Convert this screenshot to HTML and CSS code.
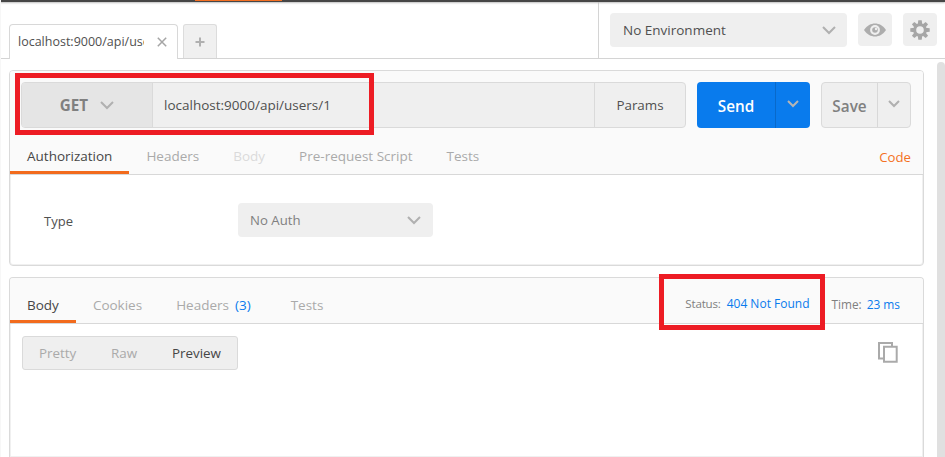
FILE: index.html
```html
<!DOCTYPE html>
<html lang="en">
<head>
<meta charset="utf-8">
<title>Request builder</title>
<link rel="stylesheet" href="styles.css">
</head>
<body>
<div class="app">
  <div class="topbar"><span class="topbar-active"></span></div>
  <header class="header">
    <div class="tabs">
      <div class="tab"><span class="tab-name">localhost:9000/api/users/1</span>
        <svg class="close" width="10" height="10" viewBox="0 0 10 10"><path d="M.8.8 9.2 9.2M9.2.8.8 9.2"/></svg></div>
      <div class="tab-add"><svg width="10" height="10" viewBox="0 0 10 10"><path d="M5 .5v9M.5 5h9"/></svg></div>
    </div>
    <div class="environment">
      <div class="select env-select"><span>No Environment</span><svg class="chevron" width="14" height="9" viewBox="0 0 14 9"><path d="M1 1l6 6 6-6"/></svg></div>
      <div class="icon-button eye"><svg width="22" height="14" viewBox="0 0 22 14"><path fill="#adadad" d="M0 7C3 2.500 7 .5 11 .5S19 2.500 22 7C19 11.500 15 13.500 11 13.500S3 11.500 0 7z"/><circle cx="11" cy="7" r="4.900" fill="#efefef"/><circle cx="11" cy="7" r="2.800" fill="#adadad"/><circle cx="12" cy="6" r="1.200" fill="#efefef"/></svg></div>
      <div class="icon-button gear"><svg width="20" height="20" viewBox="-10 -10 20 20"><g fill="#a6a6a6"><path id="tooth" d="M-1.700-9.700h3.400l.5 4h-4.400z"/><use href="#tooth" transform="rotate(45)"/><use href="#tooth" transform="rotate(90)"/><use href="#tooth" transform="rotate(135)"/><use href="#tooth" transform="rotate(180)"/><use href="#tooth" transform="rotate(225)"/><use href="#tooth" transform="rotate(270)"/><use href="#tooth" transform="rotate(315)"/></g><circle r="5.300" fill="none" stroke="#a6a6a6" stroke-width="3"/></svg></div>
    </div>
  </header>
  <main class="content">
    <section class="panel request">
      <div class="panel-head">
        <div class="url-row">
          <div class="url-group">
            <div class="method"><span>GET</span><svg class="chevron" width="14" height="9" viewBox="0 0 14 9"><path d="M1 1l6 6 6-6"/></svg></div>
            <div class="url"><span>localhost:9000/api/users/1</span></div>
            <div class="params"><span>Params</span></div>
          </div>
          <div class="split send"><div class="split-main"><span>Send</span></div><div class="split-arrow"><svg class="chevron" width="12" height="8" viewBox="0 0 12 8"><path d="M1 1l5 5 5-5"/></svg></div></div>
          <div class="split save"><div class="split-main"><span>Save</span></div><div class="split-arrow"><svg class="chevron" width="12" height="8" viewBox="0 0 12 8"><path d="M1 1l5 5 5-5"/></svg></div></div>
        </div>
        <nav class="subtabs">
          <div class="subtab active"><span>Authorization</span></div>
          <div class="subtab"><span>Headers</span></div>
          <div class="subtab disabled"><span>Body</span></div>
          <div class="subtab"><span>Pre-request Script</span></div>
          <div class="subtab"><span>Tests</span></div>
          <span class="code">Code</span>
        </nav>
      </div>
      <div class="auth"><span class="auth-label">Type</span>
        <div class="select auth-select"><span>No Auth</span><svg class="chevron" width="14" height="9" viewBox="0 0 14 9"><path d="M1 1l6 6 6-6"/></svg></div>
      </div>
    </section>
    <section class="panel response">
      <div class="panel-head response-head">
        <nav class="subtabs">
          <div class="subtab active"><span>Body</span></div>
          <div class="subtab"><span>Cookies</span></div>
          <div class="subtab counted"><span>Headers</span><span class="count">(3)</span></div>
          <div class="subtab"><span>Tests</span></div>
        </nav>
        <div class="meta"><span class="status-label">Status:</span><span class="value status-value">404 Not Found</span><span class="time-label">Time:</span><span class="value time-value">23 ms</span></div>
      </div>
      <div class="response-tools">
        <div class="views"><span>Pretty</span><span>Raw</span><span class="selected">Preview</span></div>
        <svg class="copy" width="20" height="21" viewBox="0 0 20 21"><path d="M5 16.500H1V1h13v3M6 4.800h12.700v15H6z"/></svg>
      </div>
    </section>
  </main>
  <div class="scrollbar"></div>
  <div class="highlight highlight-url"></div>
  <div class="highlight highlight-status"></div>
</div>
</body>
</html>
```
FILE: styles.css
```css
* { box-sizing: border-box; }
body { margin: 0; background: #fff; font: 13.4px/18px "Open Sans", sans-serif; color: #505050; }
.app { position: relative; width: 945px; height: 457px; overflow: hidden; display: flex; flex-direction: column; border-left: 1px solid #f7f7f7; }
.app span { white-space: nowrap; }
svg { display: block; flex: none; }
.topbar { height: 2px; flex: none; margin-left: -1px; background: #464646; padding-left: 195px; box-shadow: 0 1px 2px #bbb; z-index: 1; }
.topbar-active { display: block; width: 87px; height: 1px; background: #f47023; }
.header { height: 57px; flex: none; display: flex; border-bottom: 1px solid #d4d4d4; }
.tabs { width: 598px; border-right: 1px solid #d4d4d4; display: flex; align-items: flex-end; padding-left: 8px; gap: 5px; }
.tab { width: 169px; height: 35px; margin-bottom: -1px; border: 1px solid #d8d8d8; border-bottom: 0; border-radius: 4px 4px 0 0; background: #fff; display: flex; align-items: center; padding-left: 8px; }
.tab-name { width: 126px; overflow: hidden; font-size: 12.5px; }
.close { margin-left: 13px; }
.close path { stroke: #a5a5a5; stroke-width: 1.5; }
.tab-add { width: 34px; height: 34px; border: 1px solid #dcdcdc; border-bottom: 0; border-radius: 3px 3px 0 0; background: #f0f0f0; display: flex; align-items: center; justify-content: center; }
.tab-add path { stroke: #b0b0b0; stroke-width: 2; }
.environment { display: flex; padding: 11px 0 0 11px; }
.select { background: #efefef; border-radius: 4px; height: 34px; display: flex; align-items: center; justify-content: space-between; padding: 0 12px; }
.env-select { width: 237px; padding: 0 11px 0 13px; font-size: 13.5px; }
.chevron path { fill: none; stroke: #b0b0b0; stroke-width: 2; }
.icon-button { width: 34px; height: 33px; background: #efefef; border-radius: 4px; display: flex; align-items: center; justify-content: center; margin-left: 11px; }
.content { padding: 11px 0 0 8px; width: 923px; flex: 1; display: flex; flex-direction: column; gap: 11px; }
.panel { border: 1px solid #dadada; border-radius: 4px; box-shadow: inset 0 0 0 1px #f0f0f0; flex: none; overflow: hidden; }
.request { height: 196px; }
.panel-head { background: #fafafa; border-bottom: 1px solid #d8d8d8; }
.url-row { display: flex; padding: 11px 0 0 11px; height: 68px; }
.url-group { display: flex; width: 665px; height: 46px; border: 1px solid #dadada; border-radius: 4px; background: #efefef; overflow: hidden; }
.method { width: 131px; border-right: 1px solid #dadada; background: #e5e5e5; display: flex; align-items: center; justify-content: center; gap: 12px; color: #808080; font-weight: 700; font-size: 15.2px; }
.url { flex: 1; display: flex; align-items: center; padding-left: 11px; font-size: 13.5px; }
.params { width: 91px; border-left: 1px solid #dadada; display: flex; align-items: center; justify-content: center; }
.split { display: flex; height: 46px; border-radius: 4px; margin-left: 11px; font-size: 15.3px; font-weight: 600; overflow: hidden; }
.split-main, .split-arrow { display: flex; align-items: center; justify-content: center; }
.split-main { padding-top: 1px; }
.send { width: 113px; background: #097bed; color: #fff; }
.send .split-main { width: 78px; }
.send .split-arrow { width: 35px; border-left: 1px solid #0869ca; }
.send .chevron path { stroke: #b5b5b5; }
.save { width: 90px; background: #efefef; border: 1px solid #dadada; color: #808080; }
.save .split-main { width: 55px; }
.save .split-arrow { width: 33px; border-left: 1px solid #d8d8d8; }
.split-arrow .chevron { margin-bottom: 2px; }
.subtabs { display: flex; color: #aaa; }
.subtab { display: flex; align-items: center; padding: 2px 17px 0; height: 35px; border-bottom: 3px solid transparent; font-size: 13.5px; }
.subtab.active { color: #464646; border-color: #f26b1d; }
.subtab.disabled { color: #dadada; }
.code { margin: 9px 12px 0 auto; font-size: 13.2px; color: #f47023; }
.auth { display: flex; padding: 28px 0 0 34px; align-items: flex-start; }
.auth-label { width: 194px; padding-top: 9px; font-size: 13px; }
.auth-select { width: 195px; color: #808080; font-size: 13.2px; }
.response { flex: 1; border-bottom: 0; border-radius: 4px 4px 0 0; }
.response-head { display: flex; justify-content: space-between; }
.response .subtab { height: 45px; padding-top: 12px; }
.response .subtab.counted { padding-right: 23px; }
.count { color: #097bed; margin-left: 6px; }
.meta { display: flex; font-size: 12px; color: #808080; padding: 17px 23px 0 0; }
.status-label { font-size: 11.6px; letter-spacing: -.2px; }
.time-label { font-size: 11.8px; margin-left: 22px; }
.value { color: #097bed; margin-left: 6px; }
.time-value { font-size: 11.9px; margin-left: 5px; }
.response-tools { display: flex; justify-content: space-between; align-items: flex-start; padding: 12px 25px 0 12px; }
.views { display: flex; align-items: center; justify-content: space-between; width: 216px; height: 34px; background: #efefef; border: 1px solid #dadada; border-radius: 3px; padding: 0 16px; color: #aaa; }
.views .selected { color: #464646; }
.copy { margin-top: 6px; }
.copy path { fill: none; stroke: #aaa; stroke-width: 2; }
.scrollbar { position: absolute; right: 0; top: 62px; width: 8px; height: 400px; border-radius: 4px 4px 0 0; background: #e0e0e0; }
.highlight { position: absolute; border: 5px solid #ed1c24; }
.highlight-url { left: 14px; top: 73px; width: 359px; height: 62px; }
.highlight-status { left: 658px; top: 274px; width: 166px; height: 56px; }
```
